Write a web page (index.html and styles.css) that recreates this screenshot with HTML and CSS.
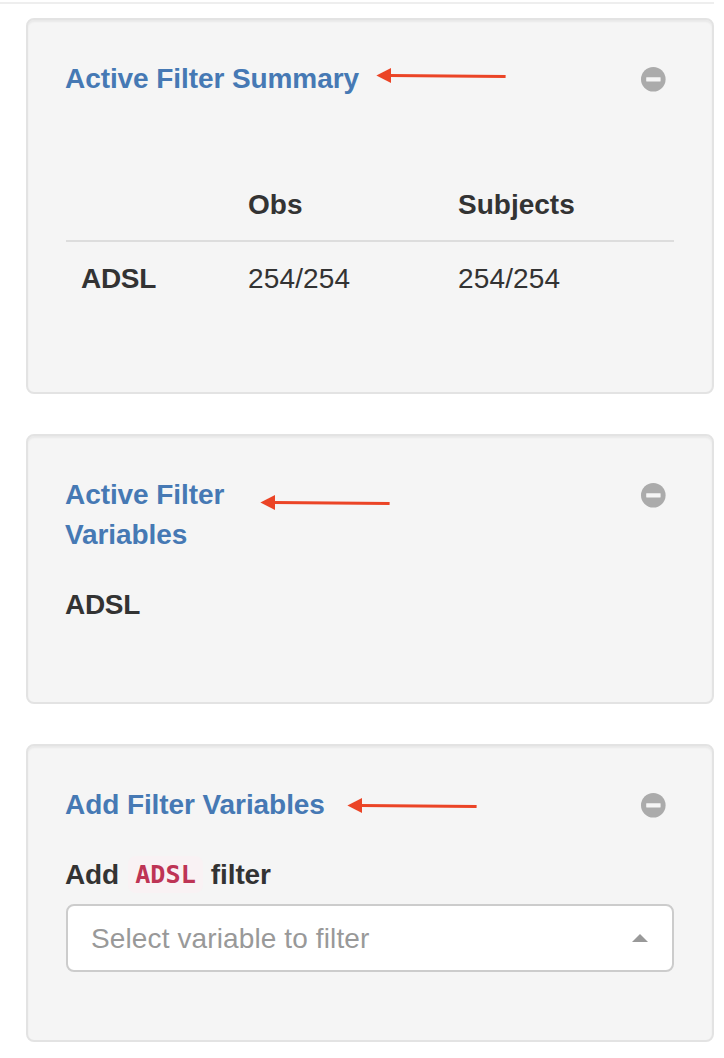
FILE: index.html
```html
<!DOCTYPE html>
<html lang="en">
<head>
<meta charset="utf-8">
<title>Filter panel</title>
<link rel="stylesheet" href="styles.css">
</head>
<body>
<div class="topline"></div>
<main class="panel">
  <section class="well summary">
    <header class="well-header">
      <h2 class="title">Active Filter Summary</h2>
      <svg class="collapse" viewBox="0 0 26 26"><circle cx="13.3" cy="13.3" r="12.3"/><rect x="6.2" y="11.2" width="14.4" height="4.3" rx=".4"/></svg>
    </header>
    <table class="counts">
      <thead><tr><th class="c-name"></th><th class="c-obs">Obs</th><th>Subjects</th></tr></thead>
      <tbody><tr><th class="row-name">ADSL</th><td>254/254</td><td>254/254</td></tr></tbody>
    </table>
    <svg class="arrow arrow-summary" viewBox="0 0 131 18"><path class="shaft" d="M14 8.4 129.6 9.6"/><path class="head" d="M.4 8.6 15 1v15z"/></svg>
  </section>

  <section class="well active">
    <header class="well-header">
      <h2 class="title title-narrow">Active Filter Variables</h2>
      <svg class="collapse" viewBox="0 0 26 26"><circle cx="13.3" cy="13.3" r="12.3"/><rect x="6.2" y="11.2" width="14.4" height="4.3" rx=".4"/></svg>
    </header>
    <div class="dataset">ADSL</div>
    <svg class="arrow arrow-active" viewBox="0 0 131 18"><path class="shaft" d="M14 8.4 129.6 9.6"/><path class="head" d="M.4 8.6 15 1v15z"/></svg>
  </section>

  <section class="well add">
    <header class="well-header">
      <h2 class="title">Add Filter Variables</h2>
      <svg class="collapse" viewBox="0 0 26 26"><circle cx="13.3" cy="13.3" r="12.3"/><rect x="6.2" y="11.2" width="14.4" height="4.3" rx=".4"/></svg>
    </header>
    <div class="label"><span>Add</span><code>ADSL</code><span>filter</span></div>
    <div class="select"><span>Select variable to filter</span><svg class="caret" viewBox="0 0 16 8"><path d="M0 8 8 0l8 8z"/></svg></div>
    <svg class="arrow arrow-add" viewBox="0 0 131 18"><path class="shaft" d="M14 8.4 129.6 9.6"/><path class="head" d="M.4 8.6 15 1v15z"/></svg>
  </section>
</main>
</body>
</html>
```

FILE: styles.css
```css
* { box-sizing: border-box; }
body {
  margin: 0;
  padding-top: 2px;
  background: #fff;
  color: #333;
  font: 28px/40px "Liberation Sans", Arial, sans-serif;
}
.topline { width: 714px; height: 2px; background: #eee; }
.panel {
  display: flex;
  flex-direction: column;
  gap: 40px;
  width: 688px;
  margin: 14px 0 0 26px;
}
.well {
  position: relative;
  padding: 39px 38px 37px 37px;
  border: 2px solid #e3e3e3;
  border-radius: 8px;
  background: #f5f5f5;
  box-shadow: inset 0 2px 2px rgba(0, 0, 0, .05);
}
.summary { height: 376px; }
.active { height: 270px; }
.add { height: 298px; }
.well-header {
  display: flex;
  justify-content: space-between;
  align-items: flex-start;
  padding-right: 8px;
}
.title {
  margin: 0;
  color: #4679b4;
  font-size: 28px;
  line-height: 40px;
  letter-spacing: -.08px;
  white-space: nowrap;
}
.title-narrow { width: 200px; white-space: normal; }
.collapse { width: 26px; height: 26px; margin-top: 7px; }
.collapse circle { fill: #ababab; }
.collapse rect { fill: #f5f5f5; }
.counts {
  width: 608px;
  margin: 69px 0 0 1px;
  border-collapse: separate;
  border-spacing: 0;
  table-layout: fixed;
}
.counts th, .counts td { padding: 17px 16px 15px; text-align: left; }
.counts td { letter-spacing: .15px; }
.counts thead th { border-bottom: 2px solid #ddd; }
.counts .row-name { padding-left: 15px; letter-spacing: -.3px; }
.c-name { width: 166px; }
.c-obs { width: 210px; }
.dataset { margin-top: 30px; font-weight: bold; letter-spacing: -.3px; }
.label { display: flex; margin-top: 30px; font-weight: bold; letter-spacing: -.1px; }
.label code {
  height: 37px;
  margin: 1px 8px 0 9px;
  padding: 0 7px;
  border-radius: 8px;
  background: #f9f2f4;
  color: #be3455;
  font: bold 25.2px/37px "DejaVu Sans Mono", monospace;
  letter-spacing: 0;
}
.select {
  display: flex;
  align-items: center;
  justify-content: space-between;
  width: 608px;
  height: 68px;
  margin: 9px 0 0 1px;
  padding: 0 24px 0 23px;
  border: 2px solid #ccc;
  border-radius: 8px;
  background: #fff;
  color: #999;
  letter-spacing: .12px;
}
.select span { padding-top: 2px; }
.caret { width: 16px; height: 8px; fill: #999; }
.arrow { position: absolute; width: 131px; height: 18px; }
.arrow-summary { left: 348px; top: 47px; }
.arrow-active { left: 232px; top: 58px; }
.arrow-add { left: 319px; top: 51px; }
.shaft { fill: none; stroke: #eb4426; stroke-width: 3; }
.head { fill: #eb4426; }
```
